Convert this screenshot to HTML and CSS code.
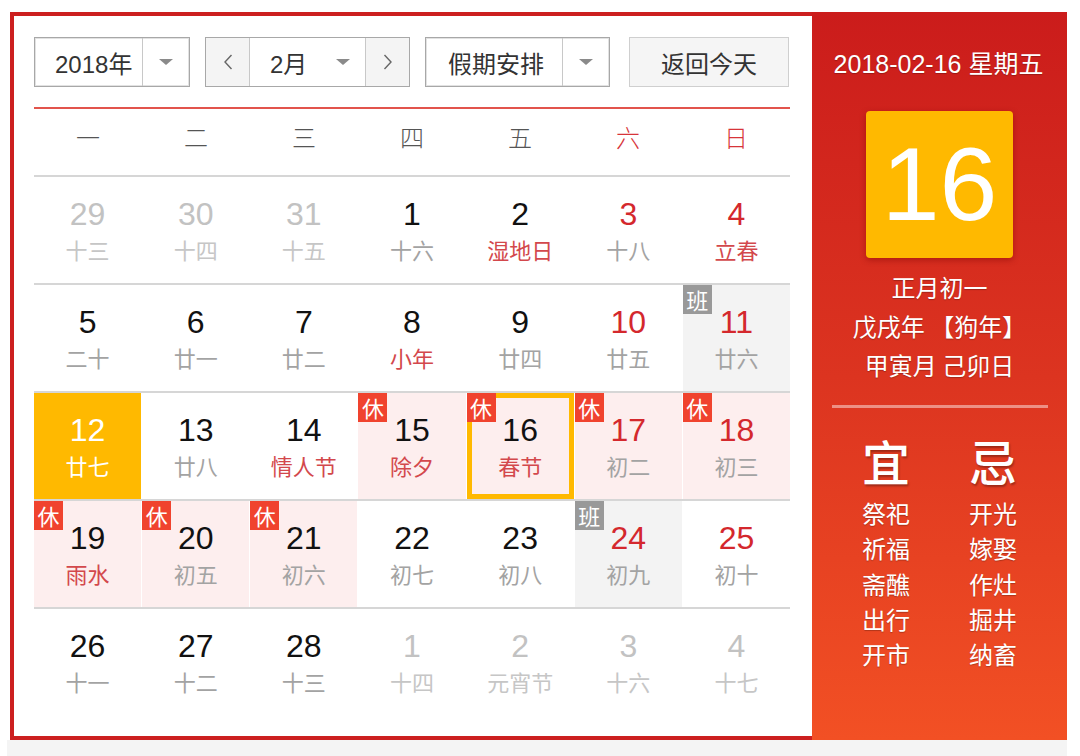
FILE: index.html
```html
<!DOCTYPE html>
<html lang="zh-CN">
<head>
<meta charset="utf-8">
<title>万年历</title>
<link rel="stylesheet" href="styles.css">
</head>
<body>
<div class="page">
  <div class="widget">
    <div class="main">
      <div class="toolbar">
        <div class="select year">
          <span class="sel-text">2018年</span>
          <span class="sel-arrow"><i class="tri"></i></span>
        </div>
        <div class="month-group">
          <span class="nav"><svg width="10" height="16" viewBox="0 0 10 16"><path d="M8.5 1 L2 8 L8.5 15" fill="none" stroke="#666" stroke-width="1.4"/></svg></span>
          <span class="month"><span class="month-text">2月</span><i class="tri"></i></span>
          <span class="nav"><svg width="10" height="16" viewBox="0 0 10 16"><path d="M1.5 1 L8 8 L1.5 15" fill="none" stroke="#666" stroke-width="1.4"/></svg></span>
        </div>
        <div class="select holiday">
          <span class="sel-text">假期安排</span>
          <span class="sel-arrow"><i class="tri"></i></span>
        </div>
        <div class="today-btn">返回今天</div>
      </div>
      <div class="rule"></div>
      <div class="weekdays">
        <span>一</span><span>二</span><span>三</span><span>四</span><span>五</span><span class="wkend">六</span><span class="wkend">日</span>
      </div>
      <div class="grid">
        <div class="row">
          <div class="cell other"><b>29</b><em>十三</em></div>
          <div class="cell other"><b>30</b><em>十四</em></div>
          <div class="cell other"><b>31</b><em>十五</em></div>
          <div class="cell"><b>1</b><em>十六</em></div>
          <div class="cell"><b>2</b><em class="fest">湿地日</em></div>
          <div class="cell red"><b>3</b><em>十八</em></div>
          <div class="cell red"><b>4</b><em class="fest">立春</em></div>
        </div>
        <div class="row">
          <div class="cell"><b>5</b><em>二十</em></div>
          <div class="cell"><b>6</b><em>廿一</em></div>
          <div class="cell"><b>7</b><em>廿二</em></div>
          <div class="cell"><b>8</b><em class="fest">小年</em></div>
          <div class="cell"><b>9</b><em>廿四</em></div>
          <div class="cell red"><b>10</b><em>廿五</em></div>
          <div class="cell red work"><span class="badge ban">班</span><b>11</b><em>廿六</em></div>
        </div>
        <div class="row">
          <div class="cell selected"><b>12</b><em>廿七</em></div>
          <div class="cell"><b>13</b><em>廿八</em></div>
          <div class="cell"><b>14</b><em class="fest">情人节</em></div>
          <div class="cell rest"><span class="badge xiu">休</span><b>15</b><em class="fest">除夕</em></div>
          <div class="cell rest today"><span class="badge xiu">休</span><b>16</b><em class="fest">春节</em></div>
          <div class="cell rest red"><span class="badge xiu">休</span><b>17</b><em>初二</em></div>
          <div class="cell rest red"><span class="badge xiu">休</span><b>18</b><em>初三</em></div>
        </div>
        <div class="row">
          <div class="cell rest"><span class="badge xiu">休</span><b>19</b><em class="fest">雨水</em></div>
          <div class="cell rest"><span class="badge xiu">休</span><b>20</b><em>初五</em></div>
          <div class="cell rest"><span class="badge xiu">休</span><b>21</b><em>初六</em></div>
          <div class="cell"><b>22</b><em>初七</em></div>
          <div class="cell"><b>23</b><em>初八</em></div>
          <div class="cell red work"><span class="badge ban">班</span><b>24</b><em>初九</em></div>
          <div class="cell red"><b>25</b><em>初十</em></div>
        </div>
        <div class="row last">
          <div class="cell"><b>26</b><em>十一</em></div>
          <div class="cell"><b>27</b><em>十二</em></div>
          <div class="cell"><b>28</b><em>十三</em></div>
          <div class="cell other"><b>1</b><em>十四</em></div>
          <div class="cell other"><b>2</b><em>元宵节</em></div>
          <div class="cell other"><b>3</b><em>十六</em></div>
          <div class="cell other"><b>4</b><em>十七</em></div>
        </div>
      </div>
    </div>
    <div class="side">
      <div class="side-date">2018-02-16 星期五</div>
      <div class="big-day">16</div>
      <div class="lunar">
        <div>正月初一</div>
        <div>戊戌年 【狗年】</div>
        <div>甲寅月 己卯日</div>
      </div>
      <div class="divider"></div>
      <div class="yiji">
        <div class="col">
          <div class="head">宜</div>
          <div>祭祀</div><div>祈福</div><div>斋醮</div><div>出行</div><div>开市</div>
        </div>
        <div class="col">
          <div class="head">忌</div>
          <div>开光</div><div>嫁娶</div><div>作灶</div><div>掘井</div><div>纳畜</div>
        </div>
      </div>
    </div>
  </div>
  <div class="strip"></div>
</div>
</body>
</html>
```

FILE: styles.css
```css
* { box-sizing: border-box; }
html, body { margin: 0; padding: 0; background: #fff; }
body {
  font-family: "Liberation Sans", "Noto Sans CJK SC", sans-serif;
  width: 1080px;
  height: 756px;
  overflow: hidden;
}
.page { padding-top: 12px; }
.widget {
  display: flex;
  margin-left: 10px;
  width: 1057px;
  height: 728px;
}
.main {
  width: 802px;
  height: 728px;
  border: 4px solid #cc1f1f;
  border-right: none;
  background: #fff;
  padding: 21px 22px 0 20px;
}
.toolbar {
  display: flex;
  height: 50px;
  font-size: 24px;
  color: #333;
}
.select {
  display: flex;
  height: 50px;
  border: 1px solid #a8a8a8;
  box-shadow: inset 0 0 0 1px #e2e2e2;
  background: #fff;
}
.year { width: 156px; }
.holiday { width: 185px; margin-left: 15px; }
.sel-text {
  display: flex;
  align-items: center;
  padding-left: 20px;
  border-right: 1px solid #c8c8c8;
}
.year .sel-text { width: 108px; }
.holiday .sel-text { width: 137px; padding-left: 22px; }
.sel-arrow {
  flex: 1;
  display: flex;
  align-items: center;
  justify-content: center;
}
.tri {
  display: block;
  width: 0;
  height: 0;
  border-left: 7px solid transparent;
  border-right: 7px solid transparent;
  border-top: 6px solid #8a8a8a;
}
.month-group {
  display: flex;
  width: 205px;
  height: 50px;
  margin-left: 15px;
  border: 1px solid #a8a8a8;
  box-shadow: inset 0 0 0 1px #e2e2e2;
}
.nav {
  width: 43px;
  display: flex;
  align-items: center;
  justify-content: center;
  background: #f4f4f4;
}
.month {
  flex: 1;
  display: flex;
  align-items: center;
  padding-left: 20px;
  border-left: 1px solid #c8c8c8;
  border-right: 1px solid #c8c8c8;
  background: #fff;
}
.month .tri { margin-left: 29px; }
.today-btn {
  width: 160px;
  height: 50px;
  margin-left: 19px;
  display: flex;
  align-items: center;
  justify-content: center;
  background: #f5f5f5;
  border: 1px solid #cfcfcf;
  color: #333;
}
.rule {
  height: 2px;
  margin-top: 20px;
  background: #e2544c;
}
.weekdays {
  display: grid;
  grid-template-columns: repeat(7, 1fr);
  height: 68px;
  border-bottom: 2px solid #d6d6d6;
  align-items: center;
  text-align: center;
  font-family: "Noto Sans CJK SC", sans-serif;
  font-weight: 300;
  font-size: 24px;
  line-height: 30px;
  color: #555;
  padding-bottom: 10px;
}
.weekdays .wkend { color: #d7343a; }
.row {
  display: grid;
  grid-template-columns: repeat(7, 1fr);
  column-gap: 1px;
  height: 108px;
  border-bottom: 2px solid #d6d6d6;
}
.row.last { border-bottom: none; }
.cell {
  position: relative;
  display: flex;
  flex-direction: column;
  align-items: center;
  padding-top: 19px;
}
.cell b {
  font-weight: normal;
  font-family: "Liberation Sans", sans-serif;
  font-size: 32px;
  line-height: 36px;
  color: #111;
}
.cell em {
  font-style: normal;
  font-family: "Noto Sans CJK SC", sans-serif;
  font-size: 22px;
  line-height: 35px;
  color: #a3a3a3;
}
.cell em.fest { color: #d3484c; }
.cell.red b { color: #d4282d; }
.cell.other b { color: #c2c2c2; }
.cell.other em { color: #c6c6c6; }
.cell.rest { background: #fdeeee; }
.cell.work { background: #f3f3f3; }
.cell.selected { background: #ffb900; }
.cell.selected b, .cell.selected em { color: #fff; }
.cell.today { box-shadow: inset 0 0 0 5px #ffb900; }
.badge {
  position: absolute;
  left: 0;
  top: 0;
  width: 29px;
  height: 29px;
  color: #fff;
  font-family: "Noto Sans CJK SC", sans-serif;
  font-size: 22px;
  line-height: 29px;
  text-align: center;
}
.badge.xiu { background: #f0432e; }
.badge.ban { background: #999; }
.side {
  width: 255px;
  height: 728px;
  background: linear-gradient(to bottom, #cb1c1b 0%, #dc3420 50%, #f25024 100%);
  display: flex;
  flex-direction: column;
  align-items: center;
  padding-top: 34px;
  color: #fff;
  font-family: "Liberation Sans", "Noto Sans CJK SC", sans-serif;
  text-shadow: 0 1px 1px rgba(0,0,0,0.25);
}
.side-date {
  font-size: 25px;
  line-height: 36px;
  margin-left: -2px;
}
.big-day {
  margin-top: 29px;
  width: 147px;
  height: 147px;
  border-radius: 4px;
  background: #ffb900;
  box-shadow: 0 2px 6px rgba(120,0,0,0.45);
  font-family: "Liberation Sans", sans-serif;
  font-size: 104px;
  line-height: 147px;
  text-align: center;
  text-shadow: none;
}
.lunar {
  margin-top: 9px;
  font-family: "Noto Sans CJK SC", sans-serif;
  font-size: 24px;
  line-height: 39px;
  text-align: center;
}
.divider {
  margin-top: 21px;
  width: 216px;
  height: 3px;
  background: rgba(255,255,255,0.45);
}
.yiji {
  margin-top: 22px;
  display: grid;
  grid-template-columns: 107px 107px;
  font-family: "Noto Sans CJK SC", sans-serif;
  font-size: 24px;
  line-height: 35.3px;
  text-align: center;
}
.yiji .head {
  font-size: 48px;
  line-height: 60px;
  font-weight: 500;
  margin-bottom: 5px;
  text-shadow: 1px 2px 2px rgba(0,0,0,0.3);
}
.strip {
  margin-left: 7px;
  width: 1060px;
  height: 16px;
  background: #f4f4f4;
}
```
